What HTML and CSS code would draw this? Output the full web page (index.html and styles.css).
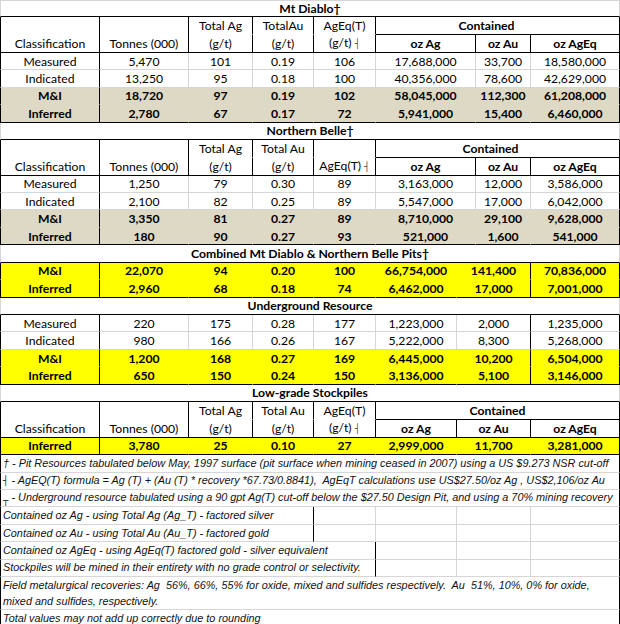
FILE: index.html
```
<!DOCTYPE html>
<html>
<head>
<meta charset="utf-8">
<link rel="stylesheet" href="styles.css">
</head>
<body>
<table class="sheet">
<colgroup>
<col class="w100"><col class="w89"><col class="w64"><col class="w61"><col class="w62"><col class="w81"><col class="w19"><col class="w55"><col class="w89">
</colgroup>
<tbody>
<tr class="title top"><td colspan="9">Mt Diablo†</td></tr>
<tr class="hd1">
<td rowspan="2" class="c1 btm">Classification</td><td rowspan="2" class="btm">Tonnes (000)</td><td>Total Ag</td><td>TotalAu</td><td>AgEq(T)</td><td colspan="4" class="cont up">Contained</td>
</tr>
<tr class="hd2"><td>(g/t)</td><td>(g/t)</td><td>(g/t) <span class="sym">┤</span></td><td colspan="2" class="b">oz Ag</td><td class="b">oz Au</td><td class="b">oz AgEq</td></tr>
<tr class="dr"><td class="c1">Measured</td><td>5,470</td><td>101</td><td>0.19</td><td>106</td><td colspan="2">17,688,000</td><td>33,700</td><td class="last">18,580,000</td></tr>
<tr class="dr"><td class="c1">Indicated</td><td>13,250</td><td>95</td><td>0.18</td><td>100</td><td colspan="2">40,356,000</td><td>78,600</td><td class="last">42,629,000</td></tr>
<tr class="tan"><td class="c1">M&amp;I</td><td>18,720</td><td>97</td><td>0.19</td><td>102</td><td colspan="2">58,045,000</td><td>112,300</td><td class="last">61,208,000</td></tr>
<tr class="tan end"><td class="c1">Inferred</td><td>2,780</td><td>67</td><td>0.17</td><td>72</td><td colspan="2">5,941,000</td><td>15,400</td><td class="last">6,460,000</td></tr>

<tr class="title"><td colspan="9">Northern Belle†</td></tr>
<tr class="hd1">
<td rowspan="2" class="c1 btm">Classification</td><td rowspan="2" class="btm">Tonnes (000)</td><td>Total Ag</td><td>Total Au</td><td></td><td colspan="4" class="cont up2">Contained</td>
</tr>
<tr class="hd2"><td>(g/t)</td><td>(g/t)</td><td>AgEq(T) <span class="sym">┤</span></td><td colspan="2" class="b">oz Ag</td><td class="b">oz Au</td><td class="b">oz AgEq</td></tr>
<tr class="dr"><td class="c1">Measured</td><td>1,250</td><td>79</td><td>0.30</td><td>89</td><td colspan="2">3,163,000</td><td>12,000</td><td class="last">3,586,000</td></tr>
<tr class="dr"><td class="c1">Indicated</td><td>2,100</td><td>82</td><td>0.25</td><td>89</td><td colspan="2">5,547,000</td><td>17,000</td><td class="last">6,042,000</td></tr>
<tr class="tan"><td class="c1">M&amp;I</td><td>3,350</td><td>81</td><td>0.27</td><td>89</td><td colspan="2">8,710,000</td><td>29,100</td><td class="last">9,628,000</td></tr>
<tr class="tan end"><td class="c1">Inferred</td><td>180</td><td>90</td><td>0.27</td><td>93</td><td colspan="2">521,000</td><td>1,600</td><td class="last">541,000</td></tr>

<tr class="title"><td colspan="9">Combined Mt Diablo &amp; Northern Belle Pits†</td></tr>
<tr class="yel"><td class="c1">M&amp;I</td><td>22,070</td><td>94</td><td>0.20</td><td>100</td><td>66,754,000</td><td colspan="2" class="c8">141,400</td><td class="last">70,836,000</td></tr>
<tr class="yel end"><td class="c1">Inferred</td><td>2,960</td><td>68</td><td>0.18</td><td>74</td><td>6,462,000</td><td colspan="2" class="c8">17,000</td><td class="last">7,001,000</td></tr>

<tr class="title"><td colspan="9">Underground Resource</td></tr>
<tr class="dr"><td class="c1">Measured</td><td>220</td><td>175</td><td>0.28</td><td>177</td><td>1,223,000</td><td colspan="2" class="c8">2,000</td><td class="last">1,235,000</td></tr>
<tr class="dr"><td class="c1">Indicated</td><td>980</td><td>166</td><td>0.26</td><td>167</td><td>5,222,000</td><td colspan="2" class="c8">8,300</td><td class="last">5,268,000</td></tr>
<tr class="yel"><td class="c1">M&amp;I</td><td>1,200</td><td>168</td><td>0.27</td><td>169</td><td>6,445,000</td><td colspan="2" class="c8">10,200</td><td class="last">6,504,000</td></tr>
<tr class="yel end"><td class="c1">Inferred</td><td>650</td><td>150</td><td>0.24</td><td>150</td><td>3,136,000</td><td colspan="2" class="c8">5,100</td><td class="last">3,146,000</td></tr>

<tr class="title"><td colspan="9">Low-grade Stockpiles</td></tr>
<tr class="hd1">
<td rowspan="2" class="c1 btm">Classification</td><td rowspan="2" class="btm">Tonnes (000)</td><td>Total Ag</td><td>Total Au</td><td>AgEq(T)</td><td colspan="4" class="cont">Contained</td>
</tr>
<tr class="hd2"><td>(g/t)</td><td>(g/t)</td><td>(g/t) <span class="sym">┤</span></td><td class="b">oz Ag</td><td colspan="2" class="b">oz Au</td><td class="b">oz AgEq</td></tr>
<tr class="yel end"><td class="c1">Inferred</td><td>3,780</td><td>25</td><td>0.10</td><td>27</td><td>2,999,000</td><td colspan="2">11,700</td><td class="last">3,281,000</td></tr>

<tr class="fn"><td colspan="9" class="c1 last">† - Pit Resources tabulated below May, 1997 surface (pit surface when mining ceased in 2007) using a US $9.273 NSR cut-off</td></tr>
<tr class="fn"><td colspan="9" class="c1 last"><span class="fsym">┤</span> - AgEQ(T) formula = Ag (T) + (Au (T) * recovery *67.73/0.8841),&nbsp; AgEqT calculations use US$27.50/oz Ag , US$2,106/oz Au</td></tr>
<tr class="fn"><td colspan="9" class="c1 last"><span class="fsym low">┬</span> - Underground resource tabulated using a 90 gpt Ag(T) cut-off below the $27.50 Design Pit, and using a 70% mining recovery</td></tr>
<tr class="fn"><td colspan="4" class="c1">Contained oz Ag - using Total Ag (Ag_T) - factored silver</td><td></td><td></td><td colspan="2"></td><td class="last"></td></tr>
<tr class="fn"><td colspan="4" class="c1">Contained oz Au - using Total Au (Au_T) - factored gold</td><td></td><td></td><td colspan="2"></td><td class="last"></td></tr>
<tr class="fn"><td colspan="5" class="c1">Contained oz AgEq - using AgEq(T) factored gold - silver equivalent</td><td></td><td colspan="2"></td><td class="last"></td></tr>
<tr class="fn"><td colspan="5" class="c1">Stockpiles will be mined in their entirety with no grade control or selectivity.</td><td></td><td colspan="2"></td><td class="last"></td></tr>
<tr class="fn wrap"><td colspan="9" class="c1 last">Field metalurgical recoveries: Ag&nbsp; 56%, 66%, 55% for oxide, mixed and sulfides respectively.&nbsp; Au&nbsp; 51%, 10%, 0% for oxide, mixed and sulfides, respectively.</td></tr>
<tr class="fn final"><td colspan="9" class="c1 last">Total values may not add up correctly due to rounding</td></tr>
</tbody>
</table>
</body>
</html>
```

FILE: styles.css
```
* { box-sizing: border-box; }
html, body { margin: 0; padding: 0; background: #fff; }
body { width: 620px; height: 624px; overflow: hidden; }

.sheet {
  width: 620px;
  table-layout: fixed;
  border-collapse: separate;
  border-spacing: 0;
  font-family: Lato, "Open Sans", sans-serif;
  font-size: 12.2px;
  color: #000;
}
.w100 { width: 100px; }
.w89 { width: 89px; }
.w64 { width: 64px; }
.w61 { width: 61px; }
.w62 { width: 62px; }
.w81 { width: 81px; }
.w19 { width: 19px; }
.w55 { width: 55px; }

.sheet tr { height: 17.45px; }
.sheet td {
  padding: 0;
  text-align: center;
  vertical-align: middle;
  white-space: nowrap;
  overflow: visible;
  line-height: 15px;
  border-right: 1px solid #d6d6d6;
  border-bottom: 1px solid #d6d6d6;
}
.sheet td.c1 { border-left: 1px solid #000; border-right-color: #000; }
.sheet td.last { border-right-color: #000; }

/* section titles */
.title td {
  font-weight: bold;
  border-left: 1px solid #d6d6d6;
  border-right-color: #d6d6d6;
  border-bottom-color: #000;
}
.title.top td { border-top: 1px solid #d6d6d6; }

/* headers */
.hd1 td { border-right-color: #000; border-bottom-color: transparent; }
.hd1 td.btm { vertical-align: bottom; border-bottom-color: #000; padding-bottom: 1px; }
.hd1 td.cont { font-weight: bold; border-bottom-color: #000; }
.hd1 td.cont.up { padding-right: 22px; }
.hd1 td.cont.up2 { padding-right: 14px; }
.hd2 td { border-right-color: #000; border-bottom-color: #000; }
.hd2 td.b { font-weight: bold; }
.sym {
  font-family: "DejaVu Sans", sans-serif;
  font-size: 9px;
  color: #444;
}

/* data */
.dr td.c8 { border-right-color: #000; }
.tan td {
  background: #ddd9c4;
  font-weight: bold;
  border-right-color: transparent;
  border-bottom-color: transparent;
}
.yel td {
  background: #ffff00;
  font-weight: bold;
  border-right-color: transparent;
  border-bottom-color: transparent;
}
.tan td.c1, .tan td.last, .yel td.c1, .yel td.last, .yel td.c8 { border-right-color: #000; }
.tan.end td, .yel.end td { border-bottom-color: #000; }

/* footnotes */
.fn td {
  font-family: "Liberation Sans", Arial, sans-serif;
  font-style: italic;
  font-size: 10.85px;
  text-align: left;
  padding-left: 2px;
  color: #111;
}
.fn.wrap { height: 30px; }
.fn.wrap td { white-space: normal; line-height: 16px; vertical-align: top; }
.fn.final { height: 16px; }
.fn.final td { border-bottom-color: #000; line-height: 14px; }
.fsym {
  font-family: "DejaVu Sans", sans-serif;
  font-style: normal;
  font-size: 9px;
}
.fsym.low { position: relative; top: 3px; }
```
